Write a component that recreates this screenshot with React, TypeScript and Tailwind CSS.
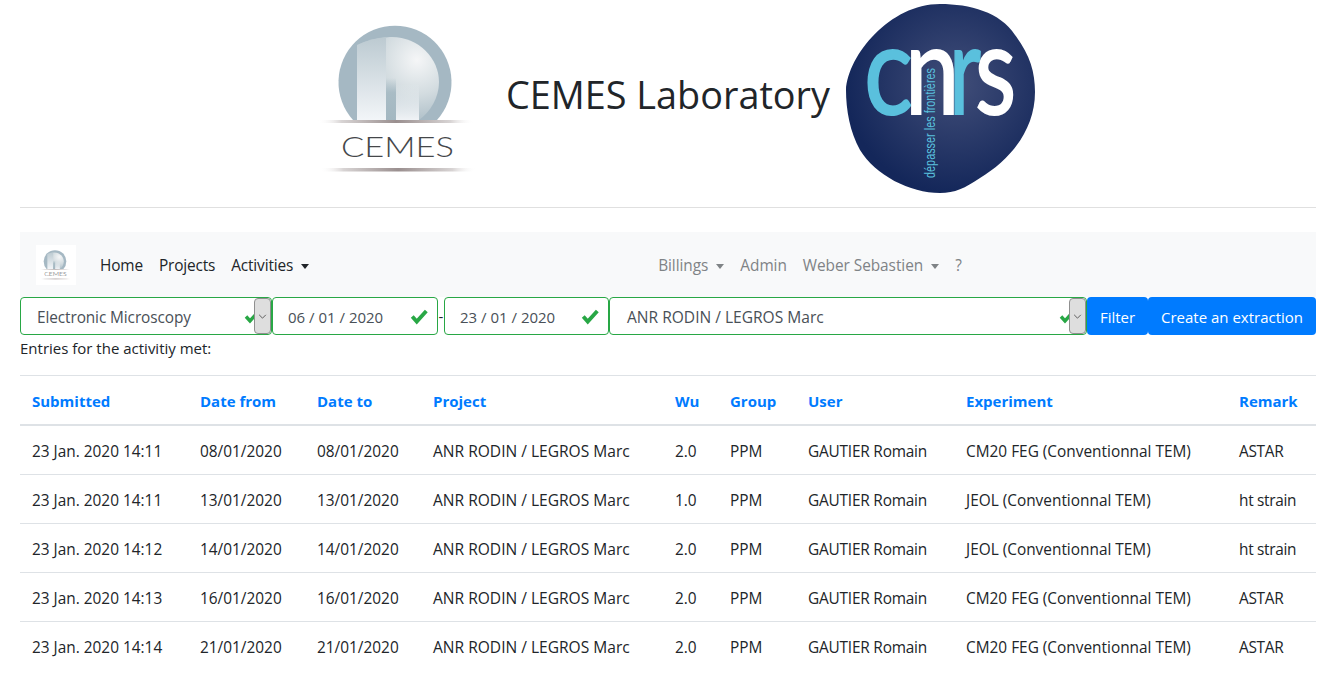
import React from "react";

const rows = [
  ["23 Jan. 2020 14:11", "08/01/2020", "08/01/2020", "2.0", "CM20 FEG (Conventionnal TEM)", "ASTAR"],
  ["23 Jan. 2020 14:11", "13/01/2020", "13/01/2020", "1.0", "JEOL (Conventionnal TEM)", "ht strain"],
  ["23 Jan. 2020 14:12", "14/01/2020", "14/01/2020", "2.0", "JEOL (Conventionnal TEM)", "ht strain"],
  ["23 Jan. 2020 14:13", "16/01/2020", "16/01/2020", "2.0", "CM20 FEG (Conventionnal TEM)", "ASTAR"],
  ["23 Jan. 2020 14:14", "21/01/2020", "21/01/2020", "2.0", "CM20 FEG (Conventionnal TEM)", "ASTAR"],
];
const heads = ["Submitted", "Date from", "Date to", "Project", "Wu", "Group", "User", "Experiment", "Remark"];

function CemesLogo({ uid, className }: { uid: string; className: string }) {
  return (
    <svg viewBox="0 0 200 200" className={className}>
      <defs>
        <radialGradient id={uid + "a"} gradientUnits="userSpaceOnUse" cx="117" cy="60" r="62">
          <stop offset="0" stopColor="#f5f6f7" />
          <stop offset="0.55" stopColor="#d3dce0" />
          <stop offset="1" stopColor="#aebfc8" />
        </radialGradient>
        <linearGradient id={uid + "b"} x1="0" y1="0" x2="0" y2="1">
          <stop offset="0" stopColor="#bccad1" />
          <stop offset="1" stopColor="#f2f5f8" />
        </linearGradient>
        <linearGradient id={uid + "c"} x1="0" y1="0" x2="1" y2="0">
          <stop offset="0" stopColor="#ffffff" stopOpacity="0" />
          <stop offset="0.15" stopColor="#d8d4d4" />
          <stop offset="0.5" stopColor="#9a8f8f" />
          <stop offset="0.85" stopColor="#d8d4d4" />
          <stop offset="1" stopColor="#ffffff" stopOpacity="0" />
        </linearGradient>
        <linearGradient id={uid + "d"} x1="0" y1="0" x2="0" y2="1">
          <stop offset="0" stopColor="#a9bcc5" stopOpacity="0" />
          <stop offset="0.35" stopColor="#a9bcc5" />
          <stop offset="1" stopColor="#a3b7c1" />
        </linearGradient>
        <linearGradient id={uid + "e"} x1="0" y1="0" x2="0" y2="1">
          <stop offset="0" stopColor="#f2f5f8" stopOpacity="0" />
          <stop offset="1" stopColor="#f0f3f6" />
        </linearGradient>
      </defs>
      <path d="M53 120 A56.5 56.5 0 1 1 137 120 Z" fill="#a5b8c3" />
      <path d="M57 120 L57 45 Q72 38 90 37 C118 36 139 58 139 82 C139 98 130 112 119 120 Z" fill={`url(#${uid}a)`} />
      <path d="M57 120 L57 45 Q72 38 86 37 L86 120 Z" fill={`url(#${uid}b)`} />
      <rect x="86" y="78" width="10" height="42" fill={`url(#${uid}d)`} />
      <rect x="96" y="84" width="23" height="36" fill={`url(#${uid}e)`} />
      <rect x="18" y="120" width="156" height="3" fill={`url(#${uid}c)`} />
      <rect x="20" y="168" width="156" height="3.5" fill={`url(#${uid}c)`} />
      <text x="41" y="157" fontFamily="Lato, sans-serif" fontWeight="300" fontSize="28" fill="#45474a" textLength="113" lengthAdjust="spacingAndGlyphs">CEMES</text>
    </svg>
  );
}

function CnrsLetter({ ch, x, sx, fill }: { ch: string; x: number; sx: number; fill: string }) {
  return (
    <text
      transform={`translate(${x} 114) scale(${sx} 1)`}
      fontFamily="Lato, sans-serif"
      fontSize="125"
      fill={fill}
      stroke={fill}
      strokeWidth="2"
    >
      {ch}
    </text>
  );
}

function CnrsLogo() {
  return (
    <svg viewBox="0 0 220 200" className="w-[220px] h-[200px] shrink-0">
      <defs>
        <radialGradient id="cn" cx="0.58" cy="0.42" r="0.58">
          <stop offset="0" stopColor="#414e79" />
          <stop offset="1" stopColor="#14275a" />
        </radialGradient>
      </defs>
      <path d="M16 90 C18 55 60 4 110 4 C140 4 170 12 185 35 C200 55 205 72 205 92 C205 130 180 160 150 178 C135 188 125 193 110 193 C80 193 45 175 30 150 C20 132 16 110 16 90 Z" fill="url(#cn)" />
      <CnrsLetter ch="c" x={34} sx={0.82} fill="#5ac0dd" />
      <CnrsLetter ch="n" x={75} sx={0.78} fill="#ffffff" />
      <CnrsLetter ch="r" x={119} sx={0.7} fill="#5ac0dd" />
      <CnrsLetter ch="s" x={145} sx={0.76} fill="#ffffff" />
      <text transform="translate(105 178) rotate(-90)" fontFamily="'Liberation Sans', sans-serif" fontSize="14" fill="#5ac0dd" textLength="110" lengthAdjust="spacingAndGlyphs">dépasser les frontières</text>
    </svg>
  );
}

function Caret() {
  return <span className="inline-block ml-2 align-middle border-x-[4px] border-x-transparent border-t-[5px] border-t-current" />;
}

function Check({ className }: { className: string }) {
  return (
    <svg viewBox="0 0 16 16" className={className}>
      <path d="M2 8.5 L6 13 L14.5 3.5" fill="none" stroke="#28a745" strokeWidth="3.4" />
    </svg>
  );
}

function SelectBox({ text, className, textClass }: { text: string; className: string; textClass: string }) {
  return (
    <div className={`flex shrink-0 items-center h-[38px] border border-[#28a745] rounded bg-white text-[#495057] ${className}`}>
      <span className={`flex-1 whitespace-nowrap ${textClass}`}>{text}</span>
      <Check className="w-4 h-4 mr-[-6px]" />
      <div className="relative w-[17px] h-[36px] bg-[#dedede] border border-[#8f8f8f] rounded-sm flex items-center justify-center">
        <svg viewBox="0 0 10 6" className="w-[9px] h-[5px]"><path d="M1 1 L5 5 L9 1" fill="none" stroke="#444" strokeWidth="1" /></svg>
      </div>
    </div>
  );
}

function DateBox({ text, className }: { text: string; className: string }) {
  return (
    <div className={`flex shrink-0 items-center h-[38px] border border-[#28a745] rounded bg-white text-[#495057] pl-[15px] pr-[9px] ${className}`}>
      <span className="flex-1 pt-[1px] whitespace-nowrap">{text}</span>
      <Check className="w-[18px] h-[18px]" />
    </div>
  );
}

export default function App() {
  const cols = ["w-[168px]", "w-[117px]", "w-[116px]", "w-[242px]", "w-[55px]", "w-[78px]", "w-[158px]", "w-[273px]", "w-[89px]"];
  const td = "px-3 pt-[4px] whitespace-nowrap text-[15.4px]";
  return (
    <div className="ml-5 mr-[9px] text-[#212529] text-[15px] leading-6 font-['Open_Sans','Noto_Sans',sans-serif]">
      <header className="flex items-start h-[207px] pl-[280px]">
        <CemesLogo uid="big" className="w-[200px] h-[200px] shrink-0" />
        <h1 className="text-[37.8px] leading-[46px] mt-[72px] ml-[6px] whitespace-nowrap">CEMES Laboratory</h1>
        <CnrsLogo />
      </header>
      <hr className="border-t border-[#e0e0e0]" />
      <nav className="flex items-center h-[65px] mt-6 bg-[#f8f9fa] pl-4 text-[15.4px] tracking-[-0.15px]">
        <div className="w-10 h-10 bg-white flex items-center justify-center">
          <CemesLogo uid="small" className="w-10 h-10" />
        </div>
        <div className="flex items-center ml-6 pt-[2px] gap-4">
          <span>Home</span>
          <span>Projects</span>
          <span>Activities<Caret /></span>
        </div>
        <div className="flex items-center ml-[349px] pt-[2px] gap-4 text-[#7f8386] tracking-[-0.05px]">
          <span>Billings<Caret /></span>
          <span>Admin</span>
          <span>Weber Sebastien<Caret /></span>
          <span>?</span>
        </div>
      </nav>
      <div className="flex items-center h-[38px]">
        <SelectBox text="Electronic Microscopy" className="w-[252px] text-[15.4px] tracking-[-0.1px]" textClass="pl-4 pt-[4px]" />
        <DateBox text="06 / 01 / 2020" className="w-[166px]" />
        <span className="w-[6px] shrink-0 text-center">-</span>
        <DateBox text="23 / 01 / 2020" className="w-[165px]" />
        <SelectBox text="ANR RODIN / LEGROS Marc" className="w-[478px] text-[15.55px]" textClass="pl-[17px] pt-[2px]" />
        <button className="h-[38px] w-[61px] shrink-0 pt-[1px] rounded bg-[#007bff] text-white">Filter</button>
        <button className="h-[38px] flex-1 pt-[1px] rounded bg-[#007bff] text-white whitespace-nowrap">Create an extraction</button>
      </div>
      <p className="mt-[1px] h-[24px]">Entries for the activitiy met:</p>
      <hr className="border-t border-[#dee2e6] mt-[15px]" />
      <table className="table-fixed w-full border-collapse">
        <colgroup>
          {cols.map((c, i) => <col key={i} className={c} />)}
        </colgroup>
        <thead>
          <tr className="h-[49px] border-b-2 border-[#dee2e6]">
            {heads.map((h) => (
              <th key={h} className="px-3 pt-[2px] text-left font-bold text-[#007bff] whitespace-nowrap">{h}</th>
            ))}
          </tr>
        </thead>
        <tbody>
          {rows.map((r, i) => (
            <tr key={i} className={i < rows.length - 1 ? "h-[49px] border-b border-[#dee2e6]" : "h-[49px]"}>
              <td className={td}>{r[0]}</td>
              <td className={td}>{r[1]}</td>
              <td className={td}>{r[2]}</td>
              <td className="px-3 pt-[2px] whitespace-nowrap text-[15.55px]">ANR RODIN / LEGROS Marc</td>
              <td className={td}>{r[3]}</td>
              <td className={td}>PPM</td>
              <td className={`${td} tracking-[-0.2px]`}>GAUTIER Romain</td>
              <td className={td}>{r[4]}</td>
              <td className={`${td} tracking-[-0.3px]`}>{r[5]}</td>
            </tr>
          ))}
        </tbody>
      </table>
    </div>
  );
}
